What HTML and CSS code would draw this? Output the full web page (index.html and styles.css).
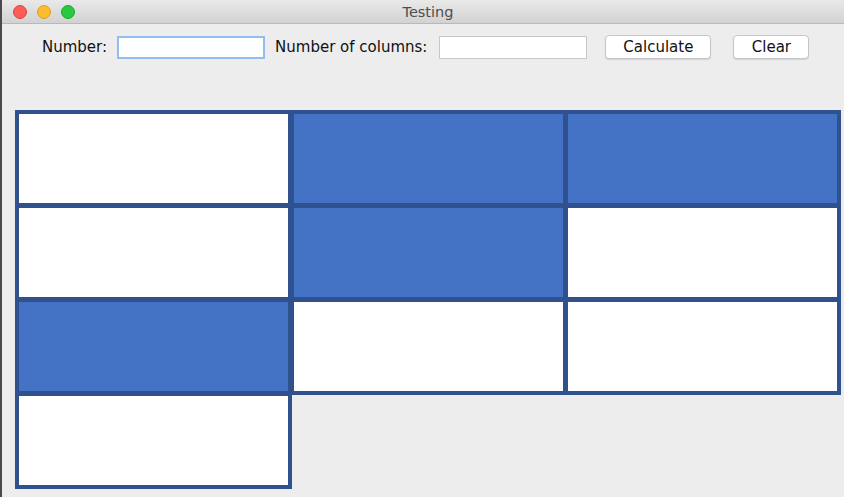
FILE: index.html
```html
<!DOCTYPE html>
<html>
<head>
<meta charset="utf-8">
<title>Testing</title>
<link rel="stylesheet" href="styles.css">
</head>
<body>
<div class="window">
  <div class="titlebar">
    <div class="lights">
      <span class="light red"></span>
      <span class="light yellow"></span>
      <span class="light green"></span>
    </div>
    <div class="title">Testing</div>
  </div>
  <div class="toolbar">
    <label class="label">Number:</label>
    <input class="field focused" type="text">
    <label class="label wide">Number of columns:</label>
    <input class="field" type="text">
    <button class="btn calc">Calculate</button>
    <button class="btn clear">Clear</button>
  </div>
  <div class="grid">
    <div class="cell"></div>
    <div class="cell on"></div>
    <div class="cell on"></div>
    <div class="cell"></div>
    <div class="cell on"></div>
    <div class="cell"></div>
    <div class="cell on"></div>
    <div class="cell"></div>
    <div class="cell"></div>
    <div class="cell"></div>
  </div>
</div>
</body>
</html>
```
FILE: styles.css
```css
html, body {
  margin: 0;
  padding: 0;
  background: #ececec;
}
.window {
  width: 844px;
  height: 497px;
  overflow: hidden;
  background: #ededed;
  border-left: 2px solid #4a4a4a;
  box-sizing: border-box;
  font-family: "DejaVu Sans", "Liberation Sans", sans-serif;
}
.titlebar {
  position: relative;
  height: 23px;
  background: linear-gradient(#e9e9e9, #d2d2d2);
  border-bottom: 1px solid #b9b9b9;
  display: flex;
  align-items: center;
  justify-content: center;
}
.lights {
  position: absolute;
  left: 11px;
  top: 5px;
  display: flex;
  gap: 10px;
}
.light {
  width: 14px;
  height: 14px;
  border-radius: 50%;
  box-sizing: border-box;
}
.red { background: #fd5d57; border: 1px solid #e0443e; }
.yellow { background: #fdbc2e; border: 1px solid #dea123; }
.green { background: #28c840; border: 1px solid #1aab29; }
.title {
  font-size: 14.5px;
  color: #4d4d4d;
  padding-left: 10px;
}
.toolbar {
  display: flex;
  align-items: center;
  padding: 11px 0 0 40px;
  height: 24px;
}
.label {
  font-size: 15px;
  color: #111;
  margin-right: 10px;
}
.label.wide {
  margin-right: 12px;
}
.field {
  width: 148px;
  height: 23px;
  box-sizing: border-box;
  border: 1px solid #c8c8c8;
  background: #fff;
  margin: 0 10px 0 0;
  padding: 0;
  outline: none;
}
.field.focused {
  border: 2px solid #93bdf0;
}
.btn {
  height: 24px;
  box-sizing: border-box;
  border: 1px solid #c6c6c6;
  border-radius: 4px;
  background: #fff;
  font-family: "DejaVu Sans", "Liberation Sans", sans-serif;
  font-size: 15px;
  color: #111;
  padding: 0;
  box-shadow: 0 1px 1px rgba(0,0,0,0.12);
}
.calc {
  width: 106px;
  margin-left: 8px;
}
.clear {
  width: 76px;
  margin-left: 22px;
}
.grid {
  display: grid;
  grid-template-columns: 275px 274px 276px;
  grid-auto-rows: 94px;
  margin: 51px 0 0 13px;
}
.cell {
  width: 277px;
  height: 97px;
  box-sizing: border-box;
  border: 4px solid #2f528f;
  background: #fff;
}
.cell.on {
  background: #4472c4;
}
```
